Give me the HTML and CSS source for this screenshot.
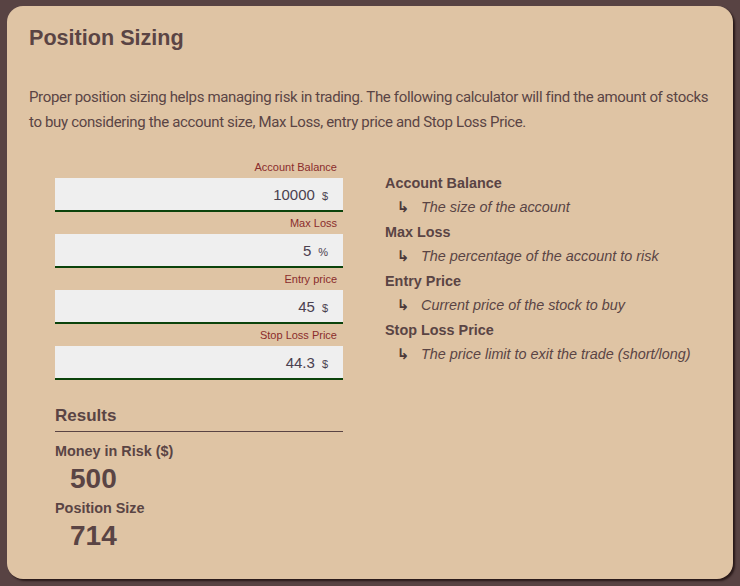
FILE: index.html
```html
<!DOCTYPE html>
<html>
<head>
<meta charset="utf-8">
<link rel="stylesheet" href="styles.css">
</head>
<body>
<div class="card">
  <h1 class="title">Position Sizing</h1>
  <p class="intro">Proper position sizing helps managing risk in trading. The following calculator will find the amount of stocks to buy considering the account size, Max Loss, entry price and Stop Loss Price.</p>
  <div class="main">
    <div class="left">
      <div class="field">
        <div class="label">Account Balance</div>
        <div class="input"><span class="val">10000</span><span class="unit">$</span></div>
      </div>
      <div class="field">
        <div class="label">Max Loss</div>
        <div class="input"><span class="val">5</span><span class="unit">%</span></div>
      </div>
      <div class="field">
        <div class="label">Entry price</div>
        <div class="input"><span class="val">45</span><span class="unit">$</span></div>
      </div>
      <div class="field">
        <div class="label">Stop Loss Price</div>
        <div class="input"><span class="val">44.3</span><span class="unit">$</span></div>
      </div>
      <div class="results">
        <div class="res-title">Results</div>
        <div class="res-label">Money in Risk ($)</div>
        <div class="res-value">500</div>
        <div class="res-label">Position Size</div>
        <div class="res-value">714</div>
      </div>
    </div>
    <div class="right">
      <div class="term">Account Balance</div>
      <div class="desc"><span class="arrow">↳</span><em>The size of the account</em></div>
      <div class="term">Max Loss</div>
      <div class="desc"><span class="arrow">↳</span><em>The percentage of the account to risk</em></div>
      <div class="term">Entry Price</div>
      <div class="desc"><span class="arrow">↳</span><em>Current price of the stock to buy</em></div>
      <div class="term">Stop Loss Price</div>
      <div class="desc"><span class="arrow">↳</span><em>The price limit to exit the trade (short/long)</em></div>
    </div>
  </div>
</div>
</body>
</html>
```
FILE: styles.css
```css
html, body {
  margin: 0;
  padding: 0;
}
body {
  background: #584343;
  width: 740px;
  height: 586px;
  padding: 6px 0 0 7px;
  box-sizing: border-box;
  font-family: "Liberation Sans", Arial, sans-serif;
  color: #5a4444;
}
.card {
  width: 726px;
  height: 573px;
  box-sizing: border-box;
  background: #dfc4a4;
  border-radius: 16px;
  box-shadow: 2px 2px 2px rgba(30, 15, 15, 0.8);
  padding: 20px 22px 0 22px;
}
.title {
  margin: 0;
  font-size: 21.6px;
  font-weight: bold;
  line-height: 24px;
  color: #5a4444;
}
.intro {
  margin: 35px -6px 0 0;
  font-family: Roboto, "Liberation Sans", sans-serif;
  font-size: 15px;
  letter-spacing: -0.34px;
  line-height: 25px;
  color: #5a4444;
}
.main {
  display: flex;
  margin-top: 26px;
}
.left {
  width: 288px;
  margin-left: 26px;
  display: flex;
  flex-direction: column;
}
.field {
  display: flex;
  flex-direction: column;
}
.label {
  text-align: right;
  font-size: 11px;
  line-height: 12px;
  color: #8a2c2c;
  padding-right: 6px;
  height: 17px;
  margin-top: 5px;
}
.field:first-child .label {
  margin-top: 0;
}
.input {
  height: 32px;
  background: #efefef;
  border-bottom: 2px solid #0b430b;
  display: flex;
  justify-content: flex-end;
  align-items: center;
  padding-right: 15px;
  box-sizing: content-box;
  color: #4b4150;
}
.val {
  font-size: 15px;
}
.unit {
  font-size: 11px;
  margin-left: 7px;
  margin-top: 3px;
}
.results {
  margin-top: 26px;
}
.res-title {
  font-size: 17px;
  font-weight: bold;
  line-height: 20px;
  padding-bottom: 5px;
  border-bottom: 1px solid #5a4444;
}
.res-label {
  font-size: 14.4px;
  font-weight: bold;
  margin-top: 6px;
  line-height: 16px;
}
.res-title + .res-label {
  margin-top: 11px;
}
.res-value {
  font-size: 28px;
  font-weight: bold;
  line-height: 30px;
  margin-left: 15px;
  margin-top: 5px;
}
.right {
  margin-left: 42px;
  padding-top: 10px;
}
.term {
  font-size: 14.4px;
  font-weight: bold;
  line-height: 24px;
}
.desc {
  font-size: 14.4px;
  line-height: 25px;
  display: flex;
}
.arrow {
  font-family: "DejaVu Sans", sans-serif;
  font-weight: bold;
  font-size: 15px;
  width: 36px;
  text-align: center;
  color: #4a3838;
}
.desc em {
  font-style: italic;
}
```
